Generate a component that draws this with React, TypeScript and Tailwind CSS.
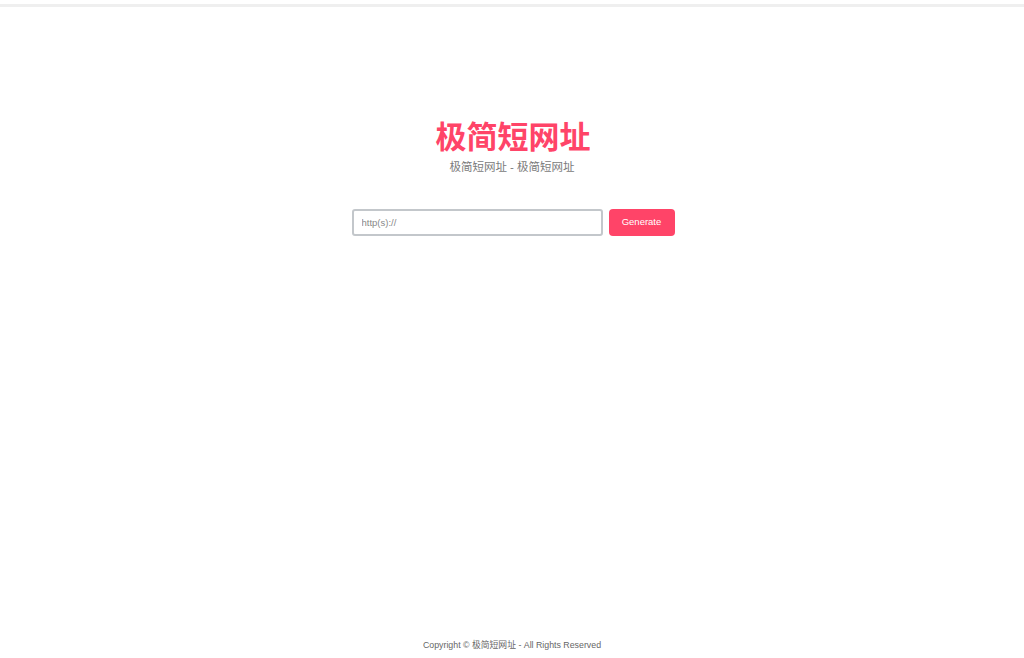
export default function App() {
  return (
    <div
      className="flex min-h-screen flex-col bg-white"
      style={{ fontFamily: '"Liberation Sans", Arial, "Noto Sans CJK SC", sans-serif' }}
    >
      <div className="mt-[4px] h-[3px] w-full bg-[#efefef]" />

      <main className="flex flex-1 flex-col items-center">
        <h1 className="ml-[2px] mt-[113px] text-[31px] font-bold leading-[36px] text-[#ff4468]">
          极简短网址
        </h1>
        <p className="mt-[3px] text-[11.5px] leading-[16px] text-[#7a7a7a]">
          极简短网址 - 极简短网址
        </p>

        <form className="ml-[2px] mt-[34px] flex items-center gap-[6px]" onSubmit={(e) => e.preventDefault()}>
          <input
            type="text"
            placeholder="http(s)://"
            className="h-[27px] w-[251px] rounded-[3px] border-2 border-[#c3c7cb] px-[8px] text-[9.5px] text-[#333] outline-none placeholder:text-[#888]"
          />
          <button
            type="submit"
            className="h-[27px] w-[66px] rounded-[4px] bg-[#ff4468] text-[9.5px] text-white"
          >
            Generate
          </button>
        </form>
      </main>

      <footer className="pb-[7px] text-center text-[8.8px] leading-[12px] text-[#666]">
        Copyright © 极简短网址 - All Rights Reserved
      </footer>
    </div>
  )
}
